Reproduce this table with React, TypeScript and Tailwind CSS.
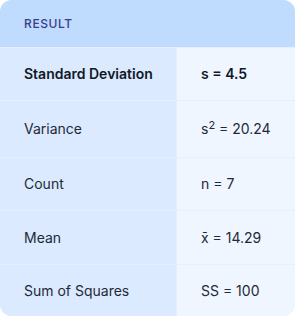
const rows: { label: string; value: React.ReactNode; strong?: boolean; h: string }[] = [
    { label: 'Standard Deviation', value: 's = 4.5', strong: true, h: 'h-[53px]' },
    {
        label: 'Variance',
        value: (
            <>
                s<sup className="text-[11px]">2</sup> = 20.24
            </>
        ),
        h: 'h-[57px]',
    },
    { label: 'Count', value: 'n = 7', h: 'h-[53px]' },
    { label: 'Mean', value: 'x̄ = 14.29', h: 'h-[54px]' },
    { label: 'Sum of Squares', value: 'SS = 100', h: 'flex-1' },
];

export default function App() {
    return (
        <div className="w-[295px] h-[316px] bg-white font-['Inter',sans-serif]">
            <div className="h-full flex flex-col rounded-xl overflow-hidden bg-[#dbeafe]">
                {/* Header */}
                <div className="h-[47px] shrink-0 bg-[#bfdbfe] px-6 flex items-center">
                    <span className="text-xs font-medium uppercase tracking-wider text-[#3a3d8c]">Result</span>
                </div>

                {/* Rows */}
                {rows.map((row) => (
                    <div key={row.label} className={`flex border-t border-[#e6effe] ${row.h}`}>
                        <div
                            className={`w-[177px] shrink-0 pl-6 pr-2 flex items-center text-sm leading-5 whitespace-nowrap bg-[#dbeafe] border-r border-[#e6effe] text-[#1f2937] ${
                                row.strong ? 'font-semibold text-[#111827]' : ''
                            }`}
                        >
                            {row.label}
                        </div>
                        <div
                            className={`flex-1 px-6 flex items-center text-sm leading-5 whitespace-nowrap bg-[#eff6ff] text-[#1f2937] ${
                                row.strong ? 'font-semibold text-[#111827]' : ''
                            }`}
                        >
                            <span>{row.value}</span>
                        </div>
                    </div>
                ))}
            </div>
        </div>
    );
}
